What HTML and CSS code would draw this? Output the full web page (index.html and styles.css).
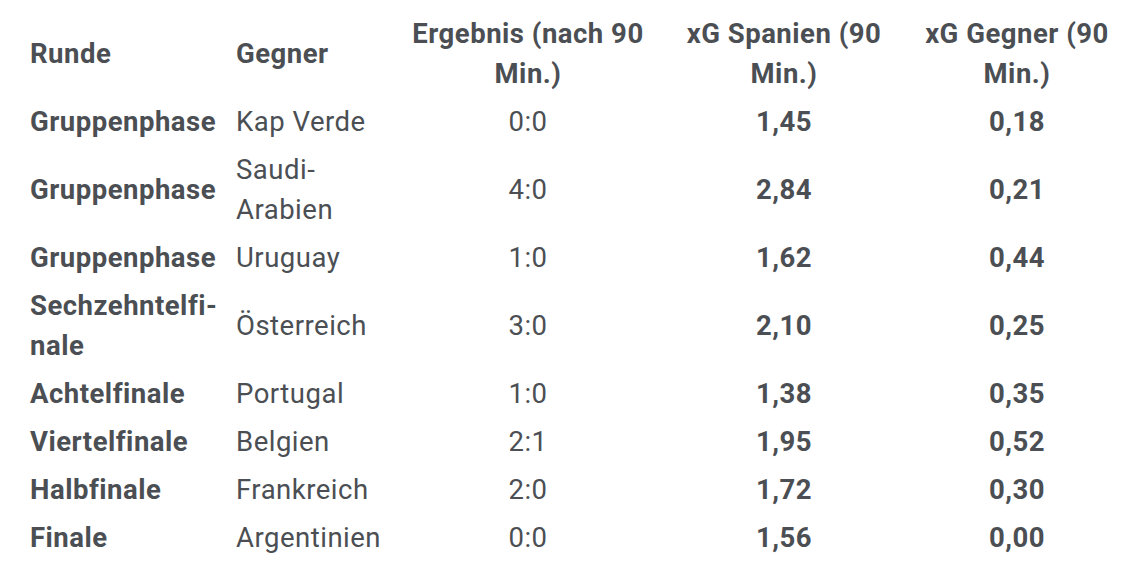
FILE: index.html
```html
<!DOCTYPE html>
<html lang="de">
<head>
<meta charset="utf-8">
<title>xG Spanien</title>
<link rel="stylesheet" href="styles.css">
</head>
<body>
<div class="wrap">
<table class="xg-table">
  <colgroup>
    <col class="c-runde">
    <col class="c-gegner">
    <col class="c-erg">
    <col class="c-xgs">
    <col class="c-xgg">
  </colgroup>
  <thead>
    <tr>
      <th class="left">Runde</th>
      <th class="left">Gegner</th>
      <th>Ergebnis (nach 90 Min.)</th>
      <th>xG Spanien (90 Min.)</th>
      <th>xG Gegner (90 Min.)</th>
    </tr>
  </thead>
  <tbody>
    <tr><td class="round">Gruppenphase</td><td>Kap Verde</td><td class="mid">0:0</td><td class="num">1,45</td><td class="num">0,18</td></tr>
    <tr><td class="round">Gruppenphase</td><td>Saudi-Arabien</td><td class="mid">4:0</td><td class="num">2,84</td><td class="num">0,21</td></tr>
    <tr><td class="round">Gruppenphase</td><td>Uruguay</td><td class="mid">1:0</td><td class="num">1,62</td><td class="num">0,44</td></tr>
    <tr><td class="round">Sechzehntelfi-<br>nale</td><td>Österreich</td><td class="mid">3:0</td><td class="num">2,10</td><td class="num">0,25</td></tr>
    <tr><td class="round">Achtelfinale</td><td>Portugal</td><td class="mid">1:0</td><td class="num">1,38</td><td class="num">0,35</td></tr>
    <tr><td class="round">Viertelfinale</td><td>Belgien</td><td class="mid">2:1</td><td class="num">1,95</td><td class="num">0,52</td></tr>
    <tr><td class="round">Halbfinale</td><td>Frankreich</td><td class="mid">2:0</td><td class="num">1,72</td><td class="num">0,30</td></tr>
    <tr><td class="round">Finale</td><td>Argentinien</td><td class="mid">0:0</td><td class="num">1,56</td><td class="num">0,00</td></tr>
  </tbody>
</table>
</div>
</body>
</html>
```

FILE: styles.css
```css
html, body {
  margin: 0;
  padding: 0;
  background: #ffffff;
}

body {
  font-family: Roboto, "Liberation Sans", sans-serif;
  color: #4b4f54;
  font-size: 27.5px;
  line-height: 40px;
  letter-spacing: 0.5px;
}

.wrap {
  padding: 10px 0 0 20px;
}

.xg-table {
  border-collapse: collapse;
  table-layout: fixed;
  width: 1104px;
}

.c-runde { width: 206px; }
.c-gegner { width: 172px; }
.c-erg { width: 260px; }
.c-xgs { width: 252px; }
.c-xgg { width: 214px; }

.xg-table th,
.xg-table td {
  padding: 4px 10px;
  vertical-align: middle;
}

.xg-table th {
  font-weight: 700;
  text-align: center;
}

.xg-table th.left {
  text-align: left;
}

.xg-table td {
  text-align: left;
  font-weight: 400;
}

.xg-table td.round {
  font-weight: 700;
  white-space: nowrap;
}

.xg-table td.mid {
  text-align: center;
}

.xg-table td.num {
  text-align: center;
  font-weight: 700;
}
```
